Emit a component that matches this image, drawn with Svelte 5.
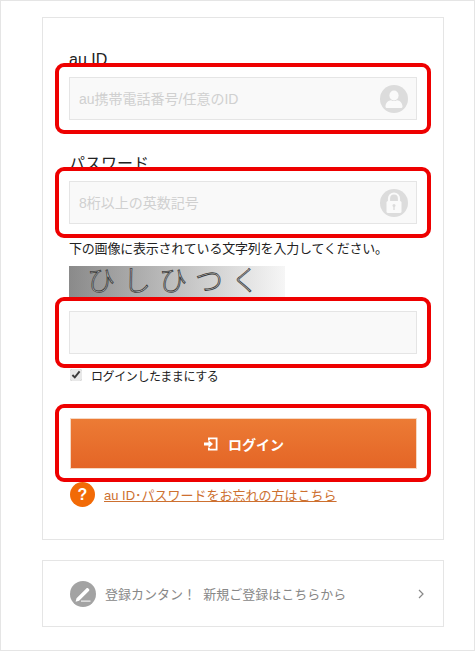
<script>
  const fields = [
    { label: "au ID", placeholder: "au携帯電話番号/任意のID", icon: "user" },
    { label: "パスワード", placeholder: "8桁以上の英数記号", icon: "lock" }
  ];
</script>

<div class="page">
  <form class="card" on:submit|preventDefault>
    {#each fields as field}
      <div class="field">
        <div class="label">{field.label}</div>
        <div class="input-wrap">
          <input class="input" type="text" placeholder={field.placeholder} />
          <svg class="input-icon" viewBox="0 0 28 28" aria-hidden="true">
            <circle cx="14" cy="14" r="14" fill="#dcdcdc" />
            {#if field.icon === "user"}
              <ellipse cx="14" cy="10.5" rx="4.6" ry="5" fill="#fafafa" />
              <path d="M5.5 21.5c0-4 3-6 5.5-6.300 1.800 1.200 4.200 1.200 6 0 2.500.3 5.500 2.300 5.500 6.300 0 1-.8 1.500-1.500 1.500h-14c-.8 0-1.500-.5-1.500-1.500z" fill="#fafafa" />
            {:else}
              <path d="M9 12V9.500a5 5 0 0 1 10 0V12" fill="none" stroke="#fafafa" stroke-width="2.200" />
              <rect x="6.500" y="12" width="15" height="12" rx="1.500" fill="#fafafa" />
              <circle cx="14" cy="16.500" r="1.500" fill="#dcdcdc" />
              <rect x="13.300" y="17" width="1.400" height="4" fill="#dcdcdc" />
            {/if}
          </svg>
          <span class="mark"></span>
        </div>
      </div>
    {/each}

    <p class="hint">下の画像に表示されている文字列を入力してください。</p>
    <div class="captcha"><span>ひしひつく</span></div>
    <div class="input-wrap captcha-input">
      <input class="input" type="text" />
      <span class="mark"></span>
    </div>

    <label class="keep">
      <input type="checkbox" checked />
      <span>ログインしたままにする</span>
    </label>

    <div class="input-wrap button-wrap">
      <button class="login" type="submit">
        <svg viewBox="0 0 16 16" aria-hidden="true">
          <path d="M5 1.500h9.500v13H5v-2.800h1.800v1h5.900V3.300H6.800v1H5z" fill="#fff" />
          <path d="M1 6.600h4.500V3.900L10 8l-4.500 4.100V9.400H1z" fill="#fff" />
        </svg>
        ログイン
      </button>
      <span class="mark button-mark"></span>
    </div>

    <div class="help">
      <span class="help-icon">?</span>
      <a href="#forgot">au ID･パスワードをお忘れの方はこちら</a>
    </div>
  </form>

  <a class="card register" href="#register">
    <svg class="pen" viewBox="0 0 26 26" aria-hidden="true">
      <circle cx="13" cy="13" r="13" fill="#a3a3a3" />
      <path d="M6.500 17.200 16.300 7.400c.6-.6 1.400-.6 2 0l.6.6c.6.6.6 1.400 0 2L9.100 19.800l-3.500.9z" fill="#fff" />
      <rect x="11" y="19.600" width="9.500" height="1" fill="#fff" />
    </svg>
    <span class="register-text">登録カンタン！&nbsp; 新規ご登録はこちらから</span>
    <svg class="chevron" viewBox="0 0 6 10" aria-hidden="true">
      <path d="M1 1l4 4-4 4" fill="none" stroke="#888" stroke-width="1.200" />
    </svg>
  </a>
</div>

<style>
  :global(body) {
    margin: 0;
    background: #fff;
  }

  .page {
    box-sizing: border-box;
    width: 475px;
    height: 651px;
    padding: 16px 31px 0 41px;
    border: 1px solid #e5e5e5;
    font-family: "Liberation Sans", "Noto Sans CJK JP", sans-serif;
    color: #222;
  }

  .card {
    display: block;
    box-sizing: border-box;
    width: 402px;
    border: 1px solid #e5e5e5;
    background: #fff;
  }

  form.card {
    height: 523px;
    padding: 33px 26px 0;
  }

  .field + .field {
    margin-top: 35px;
  }

  .label {
    height: 26px;
    font-size: 16px;
    line-height: 18px;
  }

  .input-wrap {
    position: relative;
    width: 348px;
  }

  .input {
    display: block;
    box-sizing: border-box;
    width: 100%;
    height: 43px;
    padding: 0 50px 0 9px;
    border: 1px solid #e5e5e5;
    background: #f9f9f9;
    font: inherit;
    font-size: 14px;
    outline: none;
  }

  .input::placeholder {
    color: #d0d0d0;
    opacity: 1;
  }

  .input-icon {
    position: absolute;
    top: 8px;
    right: 9px;
    width: 28px;
    height: 28px;
  }

  /* red annotation frames on top of the form */
  .mark {
    position: absolute;
    top: -14px;
    right: -14px;
    bottom: -14px;
    left: -14px;
    border: 4px solid #ee0000;
    border-radius: 9px;
    pointer-events: none;
  }

  .hint {
    margin: 16px 0 0;
    height: 26px;
    font-size: 13px;
    line-height: 18px;
    letter-spacing: -0.2px;
    white-space: nowrap;
  }

  .captcha {
    width: 216px;
    height: 32px;
    background: linear-gradient(90deg, #8a8a8a, #f6f6f6);
    text-align: center;
  }

  .captcha span {
    display: block;
    font-size: 28px;
    font-weight: 300;
    line-height: 32px;
    letter-spacing: 8px;
    color: #d0d0d0;
    -webkit-text-stroke: 0.8px #3c3c3c;
  }

  .captcha-input {
    margin-top: 13px;
  }

  .keep {
    display: flex;
    align-items: center;
    height: 20px;
    margin-top: 11px;
    font-size: 12px;
    letter-spacing: -0.4px;
  }

  .keep input {
    width: 12px;
    height: 12px;
    margin: 0 9px 0 1px;
    accent-color: #e8e8e8;
  }

  .button-wrap {
    margin-top: 33px;
  }

  .login {
    display: flex;
    align-items: center;
    justify-content: center;
    gap: 9px;
    box-sizing: border-box;
    width: 347px;
    height: 51px;
    margin-left: 1px;
    border: 1px solid #f5d9c4;
    background: linear-gradient(#ec7b35, #e46526);
    color: #fff;
    font: inherit;
    font-size: 14px;
    font-weight: 700;
  }

  .login svg {
    width: 16px;
    height: 16px;
  }

  .button-mark {
    top: -14px;
    bottom: -13px;
  }

  .help {
    display: flex;
    align-items: center;
    gap: 9px;
    margin: 13px 0 0 1px;
    font-size: 13px;
  }

  .help-icon {
    display: flex;
    align-items: center;
    justify-content: center;
    width: 25px;
    height: 25px;
    border-radius: 50%;
    background: #f26a06;
    color: #fff;
    font-size: 16px;
    font-weight: 700;
  }

  .help a {
    color: #cd7030;
  }

  .register {
    display: flex;
    align-items: center;
    height: 67px;
    margin-top: 20px;
    padding: 0 19px 0 27px;
    color: #888;
    font-size: 13px;
    text-decoration: none;
  }

  .pen {
    width: 26px;
    height: 26px;
    flex: none;
    margin-right: 9px;
  }

  .register-text {
    flex: 1;
  }

  .chevron {
    width: 6px;
    height: 10px;
  }
</style>
